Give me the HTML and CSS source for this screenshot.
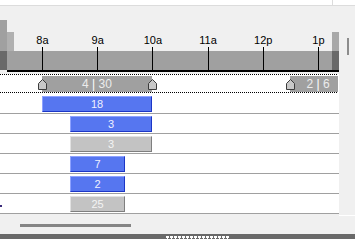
FILE: index.html
```html
<!DOCTYPE html>
<html lang="en">
<head>
    <meta charset="UTF-8">
    <meta name="viewport" content="width=device-width, initial-scale=1.0">
    <title>Schedule Timeline</title>
    <link rel="stylesheet" href="styles.css">
</head>
<body>
    <div class="top"><div class="top-left"></div></div>

    <div class="main">
        <div class="chart">
            <div class="header">
                <div class="col col-a"></div>
                <div class="col col-b"></div>
                <div class="scale">
                    <div class="slot"><span class="label">8a</span><span class="tick"></span></div>
                    <div class="slot"><span class="label">9a</span><span class="tick"></span></div>
                    <div class="slot"><span class="label">10a</span><span class="tick"></span></div>
                    <div class="slot"><span class="label">11a</span><span class="tick"></span></div>
                    <div class="slot"><span class="label">12p</span><span class="tick"></span></div>
                    <div class="slot"><span class="label">1p</span><span class="tick"></span></div>
                </div>
                <div class="col col-d"></div>
            </div>
            <div class="gap"></div>
            <div class="dots"></div>
            <div class="range-row">
                <div class="range" style="margin-left:42px;width:110px">
                    4 <span class="pipe">|</span> 30
                    <svg class="handle handle-l" width="9" height="11" viewBox="0 0 9 11"><polygon points="4.5,0.5 8.5,4.5 8.5,10.5 0.5,10.5 0.5,4.5"/></svg>
                    <svg class="handle handle-r" width="9" height="11" viewBox="0 0 9 11"><polygon points="4.5,0.5 8.5,4.5 8.5,10.5 0.5,10.5 0.5,4.5"/></svg>
                </div>
                <div class="range" style="margin-left:138px;width:56px">
                    2 <span class="pipe">|</span> 6
                    <svg class="handle handle-l" width="9" height="11" viewBox="0 0 9 11"><polygon points="4.5,0.5 8.5,4.5 8.5,10.5 0.5,10.5 0.5,4.5"/></svg>
                </div>
            </div>
            <div class="dots"></div>
            <div class="rows">
                <div class="row first"><div class="bar blue" style="margin-left:42px;width:110px">18</div></div>
                <div class="row"><div class="bar blue" style="margin-left:70px;width:82px">3</div></div>
                <div class="row"><div class="bar grey" style="margin-left:70px;width:82px">3</div></div>
                <div class="row"><div class="bar blue" style="margin-left:70px;width:55px">7</div></div>
                <div class="row"><div class="bar blue" style="margin-left:70px;width:55px">2</div></div>
                <div class="row"><span class="clip"></span><div class="bar grey" style="margin-left:68px;width:55px">25</div></div>
            </div>
        </div>
        <div class="vscroll"><div class="vthumb"></div></div>
    </div>

    <div class="hscroll">
        <div class="htrack"><div class="hthumb"></div></div>
        <div class="corner"></div>
    </div>
    <div class="splitter"><div class="grip"></div></div>
</body>
</html>
```

FILE: styles.css
```css
* {
    margin: 0;
    padding: 0;
    box-sizing: border-box;
}
body {
    width: 355px;
    height: 250px;
    overflow: hidden;
    background: #fff;
    font-family: "Liberation Sans", Arial, sans-serif;
    font-size: 11px;
}
.top {
    height: 6px;
    border-bottom: 1px solid #dcdcdc;
}
.top-left {
    width: 333px;
    height: 5px;
    border-right: 1px solid #dcdcdc;
}
.main {
    display: flex;
    height: 208px;
}
.chart {
    width: 339px;
}
.header {
    display: flex;
    height: 66px;
}
.col {
    width: 7px;
}
.col-a {
    background: linear-gradient(#f0f0f0 0 14px, #a0a0a0 14px 45px, #696969 45px 64px, #f0f0f0 64px);
}
.col-b {
    border-bottom: 2px solid #000;
    background: linear-gradient(#f0f0f0 0 26px, #b0b0b0 26px 45px, #a0a0a0 45px);
}
.col-d {
    border-bottom: 2px solid #000;
    background: linear-gradient(#f0f0f0 0 26px, #a8a8a8 26px 45px, #696969 45px);
}
.scale {
    width: 318px;
    display: flex;
    padding-left: 0.9px;
    border-bottom: 2px solid #000;
    background: linear-gradient(#f0f0f0 0 45px, #a0a0a0 45px);
}
.slot {
    width: 55.2px;
    flex: none;
    display: flex;
    flex-direction: column;
    align-items: center;
    padding-top: 28px;
}
.label {
    line-height: 13px;
    color: #000;
    white-space: nowrap;
}
.tick {
    width: 1px;
    height: 23px;
    background: #000;
}
.gap {
    height: 2px;
    background: #f0f0f0;
}
.dots {
    width: 338px;
    height: 1px;
    background: repeating-linear-gradient(90deg, #000 0 1px, #fff 1px 2px);
}
.range-row {
    width: 338px;
    height: 17px;
    display: flex;
    overflow: hidden;
}
.range {
    position: relative;
    flex: none;
    height: 16px;
    margin-top: 1px;
    background: #a0a0a0;
    color: #ececec;
    font-size: 12px;
    line-height: 16px;
    text-align: center;
    white-space: nowrap;
}
.pipe {
    color: #fff;
}
.handle {
    position: absolute;
    top: 3px;
}
.handle polygon {
    fill: #c8c8c8;
    stroke: #3c3c3c;
    stroke-width: 1;
}
.handle-l {
    left: -4px;
}
.handle-r {
    right: -5px;
}
.row {
    display: flex;
    height: 20px;
    border-bottom: 1px solid #a0a0a0;
    padding-top: 2px;
}
.row.first {
    height: 21px;
    padding-top: 3px;
}
.bar {
    flex: none;
    height: 16px;
    line-height: 14px;
    text-align: center;
    border: 1px solid;
}
.bar.blue {
    background: #5676f0;
    color: #eef0ff;
    border-color: #8ea2ff #1c36c6 #1c36c6 #8ea2ff;
}
.bar.grey {
    background: #c3c3c3;
    color: #f4f4f4;
    border-color: #e2e2e2 #7f7f7f #7f7f7f #e2e2e2;
}
.clip {
    width: 2px;
    height: 2px;
    margin-top: 9px;
    background: #3a2b7a;
}
.vscroll {
    width: 16px;
    background: #f0f0f0;
    padding: 32px 0 0 8px;
}
.vthumb {
    width: 2px;
    height: 17px;
    background: #8c8c8c;
}
.hscroll {
    display: flex;
    height: 20px;
}
.htrack {
    width: 339px;
    background: #f0f0f0;
    padding: 10px 0 0 20px;
}
.hthumb {
    width: 111px;
    height: 3px;
    background: #858585;
}
.corner {
    width: 16px;
    background: linear-gradient(#f0f0f0 0 1px, #fff 1px 2px, #f0f0f0 2px);
}
.splitter {
    height: 5px;
    background: #696969;
    padding: 2px 0 0 166px;
}
.grip {
    width: 63px;
    height: 3px;
    background:
        repeating-linear-gradient(90deg, #fff 0 3px, transparent 3px 4px) 0 0 / 100% 2px no-repeat,
        repeating-linear-gradient(90deg, transparent 0 1px, #fff 1px 2px, transparent 2px 4px) 0 2px / 100% 1px no-repeat;
}
```
